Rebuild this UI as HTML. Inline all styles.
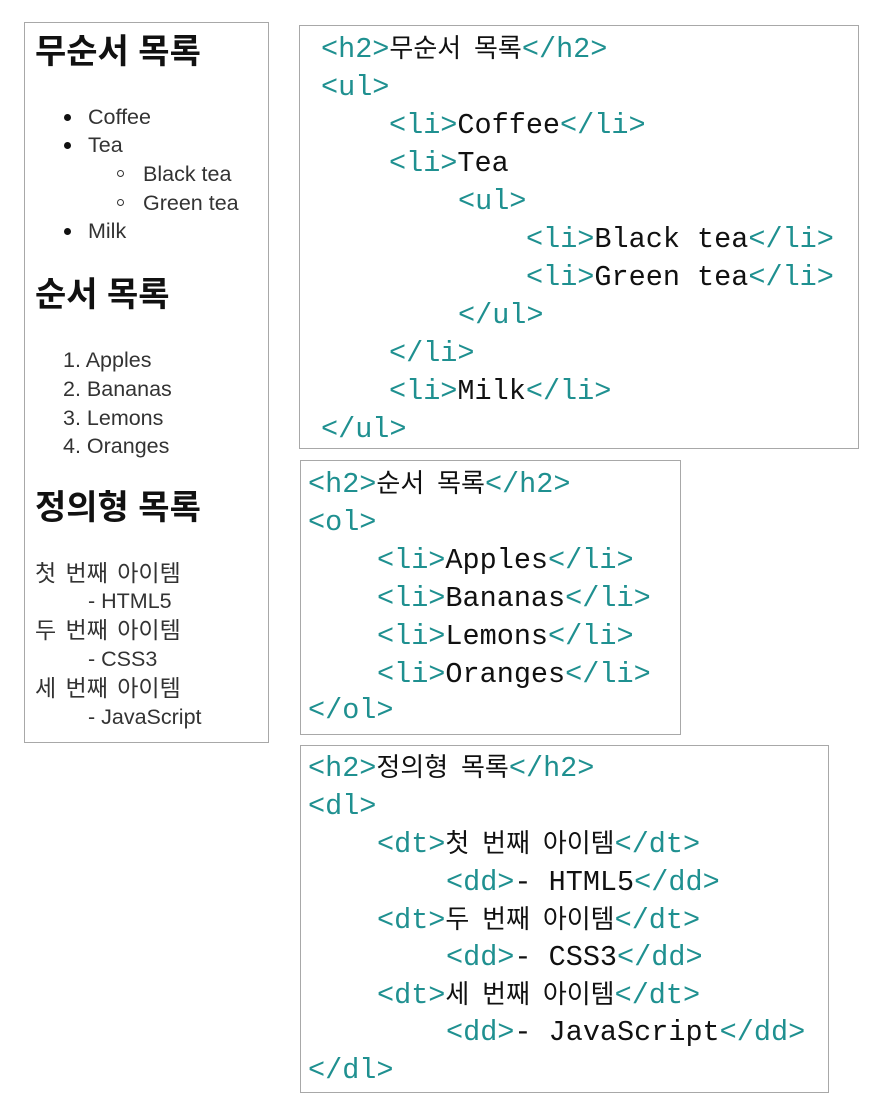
<!DOCTYPE html>
<html><head><meta charset="utf-8"><style>
body{margin:0;width:884px;height:1116px;background:#fff;position:relative;overflow:hidden}
.box{position:absolute;border:1px solid #a8a8a8;box-sizing:border-box}
.l{position:absolute;white-space:pre;font-family:"Liberation Sans","Noto Sans CJK KR",sans-serif;font-size:21.5px;line-height:28px;color:#333}
.l.k{font-size:23px;word-spacing:3px}
.h{position:absolute;white-space:pre;font-family:"Liberation Sans","Noto Sans CJK KR",sans-serif;font-size:34px;font-weight:bold;line-height:40px;color:#111}
.c{position:absolute;white-space:pre;font-family:"Liberation Mono","Noto Sans CJK KR",monospace;font-size:28.5px;line-height:38px;height:38px;color:#111}
.c .k{font-family:"Noto Sans CJK KR",sans-serif;font-size:26px;line-height:1;word-spacing:7px}
.t{color:#1f9090}
.dot{position:absolute;width:7px;height:7px;border-radius:50%;background:#111}
.odot{position:absolute;width:5px;height:5px;border-radius:50%;border:1.5px solid #333}
</style></head><body>
<div class="box" style="left:24px;top:22px;width:245px;height:721px"></div>
<div class="h" style="left:35px;top:32px">무순서 목록</div>
<div class="dot" style="left:64px;top:114px"></div><div class="l" style="left:88px;top:103px">Coffee</div>
<div class="dot" style="left:64px;top:142px"></div><div class="l" style="left:88px;top:131px">Tea</div>
<div class="odot" style="left:117px;top:170px"></div><div class="l" style="left:143px;top:160px">Black tea</div>
<div class="odot" style="left:117px;top:199px"></div><div class="l" style="left:143px;top:189px">Green tea</div>
<div class="dot" style="left:64px;top:228px"></div><div class="l" style="left:88px;top:217px">Milk</div>
<div class="h" style="left:35px;top:275px">순서 목록</div>
<div class="l" style="left:63px;top:346px">1. Apples</div>
<div class="l" style="left:63px;top:375px">2. Bananas</div>
<div class="l" style="left:63px;top:404px">3. Lemons</div>
<div class="l" style="left:63px;top:432px">4. Oranges</div>
<div class="h" style="left:35px;top:488px">정의형 목록</div>
<div class="l k" style="left:35px;top:559px">첫 번째 아이템</div>
<div class="l" style="left:88px;top:587px">- HTML5</div>
<div class="l k" style="left:35px;top:616px">두 번째 아이템</div>
<div class="l" style="left:88px;top:645px">- CSS3</div>
<div class="l k" style="left:35px;top:674px">세 번째 아이템</div>
<div class="l" style="left:88px;top:703px">- JavaScript</div>

<div class="box" style="left:299px;top:25px;width:560px;height:424px"></div>
<div class="c" style="left:321px;top:31px"><span class="t">&lt;h2&gt;</span><span class="k">무순서 목록</span><span class="t">&lt;/h2&gt;</span></div>
<div class="c" style="left:321px;top:69px"><span class="t">&lt;ul&gt;</span></div>
<div class="c" style="left:389px;top:107px"><span class="t">&lt;li&gt;</span>Coffee<span class="t">&lt;/li&gt;</span></div>
<div class="c" style="left:389px;top:145px"><span class="t">&lt;li&gt;</span>Tea</div>
<div class="c" style="left:458px;top:183px"><span class="t">&lt;ul&gt;</span></div>
<div class="c" style="left:526px;top:221px"><span class="t">&lt;li&gt;</span>Black tea<span class="t">&lt;/li&gt;</span></div>
<div class="c" style="left:526px;top:259px"><span class="t">&lt;li&gt;</span>Green tea<span class="t">&lt;/li&gt;</span></div>
<div class="c" style="left:458px;top:297px"><span class="t">&lt;/ul&gt;</span></div>
<div class="c" style="left:389px;top:335px"><span class="t">&lt;/li&gt;</span></div>
<div class="c" style="left:389px;top:373px"><span class="t">&lt;li&gt;</span>Milk<span class="t">&lt;/li&gt;</span></div>
<div class="c" style="left:321px;top:411px"><span class="t">&lt;/ul&gt;</span></div>

<div class="box" style="left:300px;top:460px;width:381px;height:275px"></div>
<div class="c" style="left:308px;top:466px"><span class="t">&lt;h2&gt;</span><span class="k">순서 목록</span><span class="t">&lt;/h2&gt;</span></div>
<div class="c" style="left:308px;top:504px"><span class="t">&lt;ol&gt;</span></div>
<div class="c" style="left:377px;top:542px"><span class="t">&lt;li&gt;</span>Apples<span class="t">&lt;/li&gt;</span></div>
<div class="c" style="left:377px;top:580px"><span class="t">&lt;li&gt;</span>Bananas<span class="t">&lt;/li&gt;</span></div>
<div class="c" style="left:377px;top:618px"><span class="t">&lt;li&gt;</span>Lemons<span class="t">&lt;/li&gt;</span></div>
<div class="c" style="left:377px;top:656px"><span class="t">&lt;li&gt;</span>Oranges<span class="t">&lt;/li&gt;</span></div>
<div class="c" style="left:308px;top:692px"><span class="t">&lt;/ol&gt;</span></div>

<div class="box" style="left:300px;top:745px;width:529px;height:348px"></div>
<div class="c" style="left:308px;top:750px"><span class="t">&lt;h2&gt;</span><span class="k">정의형 목록</span><span class="t">&lt;/h2&gt;</span></div>
<div class="c" style="left:308px;top:788px"><span class="t">&lt;dl&gt;</span></div>
<div class="c" style="left:377px;top:826px"><span class="t">&lt;dt&gt;</span><span class="k">첫 번째 아이템</span><span class="t">&lt;/dt&gt;</span></div>
<div class="c" style="left:446px;top:864px"><span class="t">&lt;dd&gt;</span>- HTML5<span class="t">&lt;/dd&gt;</span></div>
<div class="c" style="left:377px;top:902px"><span class="t">&lt;dt&gt;</span><span class="k">두 번째 아이템</span><span class="t">&lt;/dt&gt;</span></div>
<div class="c" style="left:446px;top:939px"><span class="t">&lt;dd&gt;</span>- CSS3<span class="t">&lt;/dd&gt;</span></div>
<div class="c" style="left:377px;top:977px"><span class="t">&lt;dt&gt;</span><span class="k">세 번째 아이템</span><span class="t">&lt;/dt&gt;</span></div>
<div class="c" style="left:446px;top:1014px"><span class="t">&lt;dd&gt;</span>- JavaScript<span class="t">&lt;/dd&gt;</span></div>
<div class="c" style="left:308px;top:1052px"><span class="t">&lt;/dl&gt;</span></div>
</body></html>
